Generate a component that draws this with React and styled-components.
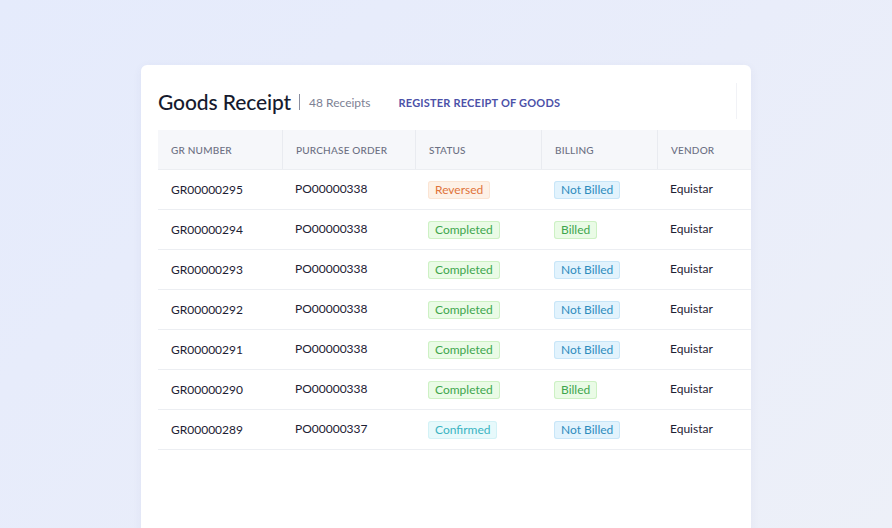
import React from "react";
import styled, { createGlobalStyle } from "styled-components";

const GlobalStyle = createGlobalStyle`
  html, body {
    margin: 0;
    padding: 0;
  }
  body {
    font-family: Lato, "Noto Sans", sans-serif;
    -webkit-font-smoothing: antialiased;
  }
`;

const Page = styled.div`
  width: 892px;
  height: 528px;
  overflow: hidden;
  background: linear-gradient(135deg, #e5ebfc 0%, #e9edfa 55%, #edf0f8 100%);
  padding: 65px 0 0 141px;
  box-sizing: border-box;
`;

const Card = styled.div`
  width: 610px;
  height: 500px;
  background: #ffffff;
  border-radius: 6px;
  box-shadow: 0 2px 10px rgba(60, 70, 120, 0.06);
  padding: 20px 0 0 17px;
  box-sizing: border-box;
  overflow: hidden;
`;

const Toolbar = styled.div`
  display: flex;
  align-items: center;
  height: 32px;
  margin-bottom: 13px;
`;

const Title = styled.h1`
  margin: 0;
  font-size: 21px;
  font-weight: 500;
  color: #161a2e;
  letter-spacing: -0.1px;
`;

const Divider = styled.span`
  width: 1px;
  height: 16px;
  background: #8a8ea0;
  margin: 2px 9px 0 8px;
`;

const Count = styled.span`
  font-size: 12px;
  color: #7d8194;
  margin-top: 2px;
`;

const Action = styled.a`
  margin-left: 28px;
  margin-top: 2px;
  font-size: 11px;
  font-weight: 700;
  letter-spacing: 0.2px;
  color: #4c51a8;
  text-transform: uppercase;
  cursor: pointer;
`;

const Edge = styled.div`
  margin-left: auto;
  width: 14px;
  height: 36px;
  border-left: 1px solid #f1f2f6;
`;

const Table = styled.div`
  width: 593px;
`;

const Row = styled.div`
  display: grid;
  grid-template-columns: 124px 133px 126px 116px 94px;
  height: 40px;
  box-sizing: border-box;
  align-items: center;
  border-bottom: 1px solid #eceef2;
  background: ${(p) => (p.head ? "#f6f7fa" : "#ffffff")};
`;

const HeadCell = styled.div`
  height: 100%;
  display: flex;
  align-items: center;
  padding-left: 13px;
  font-size: 10px;
  font-weight: 500;
  letter-spacing: 0.2px;
  color: #6c7083;
  border-left: ${(p) => (p.first ? "none" : "1px solid #e9ebf0")};
  box-sizing: border-box;
`;

const Cell = styled.div`
  padding-left: 13px;
  font-size: 12px;
  color: #1d2033;
  margin-top: ${(p) => (p.raised ? "-2px" : "0")};
`;

const badgeColors = {
  reversed: { bg: "#fdf1e7", fg: "#e0733a", bd: "#fbe4d3" },
  completed: { bg: "#eafbe6", fg: "#3ea64d", bd: "#cdf1c4" },
  confirmed: { bg: "#e7f9fb", fg: "#3ab4c2", bd: "#d3f2f6" },
  notbilled: { bg: "#e2f3fd", fg: "#2e8cbd", bd: "#c8e6f8" },
  billed: { bg: "#eafbe6", fg: "#3ea64d", bd: "#cdf1c4" },
};

const Badge = styled.span`
  display: inline-flex;
  align-items: center;
  height: 18px;
  padding: 0 7px;
  border-radius: 3px;
  font-size: 12px;
  background: ${(p) => badgeColors[p.kind].bg};
  color: ${(p) => badgeColors[p.kind].fg};
  box-shadow: inset 0 0 0 1px ${(p) => badgeColors[p.kind].bd};
`;

const rows = [
  { gr: "GR00000295", po: "PO00000338", status: "Reversed", billing: "Not Billed" },
  { gr: "GR00000294", po: "PO00000338", status: "Completed", billing: "Billed" },
  { gr: "GR00000293", po: "PO00000338", status: "Completed", billing: "Not Billed" },
  { gr: "GR00000292", po: "PO00000338", status: "Completed", billing: "Not Billed" },
  { gr: "GR00000291", po: "PO00000338", status: "Completed", billing: "Not Billed" },
  { gr: "GR00000290", po: "PO00000338", status: "Completed", billing: "Billed" },
  { gr: "GR00000289", po: "PO00000337", status: "Confirmed", billing: "Not Billed" },
];

const keyOf = (s) => s.toLowerCase().replace(" ", "");

const App = () => {
  return (
    <>
      <GlobalStyle />
      <Page>
        <Card>
          <Toolbar>
            <Title>Goods Receipt</Title>
            <Divider />
            <Count>48 Receipts</Count>
            <Action>Register receipt of goods</Action>
            <Edge />
          </Toolbar>
          <Table>
            <Row head>
              <HeadCell first>GR NUMBER</HeadCell>
              <HeadCell>PURCHASE ORDER</HeadCell>
              <HeadCell>STATUS</HeadCell>
              <HeadCell>BILLING</HeadCell>
              <HeadCell>VENDOR</HeadCell>
            </Row>
            {rows.map((r) => (
              <Row key={r.gr}>
                <Cell>{r.gr}</Cell>
                <Cell raised>{r.po}</Cell>
                <Cell>
                  <Badge kind={keyOf(r.status)}>{r.status}</Badge>
                </Cell>
                <Cell>
                  <Badge kind={keyOf(r.billing)}>{r.billing}</Badge>
                </Cell>
                <Cell raised>Equistar</Cell>
              </Row>
            ))}
          </Table>
        </Card>
      </Page>
    </>
  );
};

export default App;
